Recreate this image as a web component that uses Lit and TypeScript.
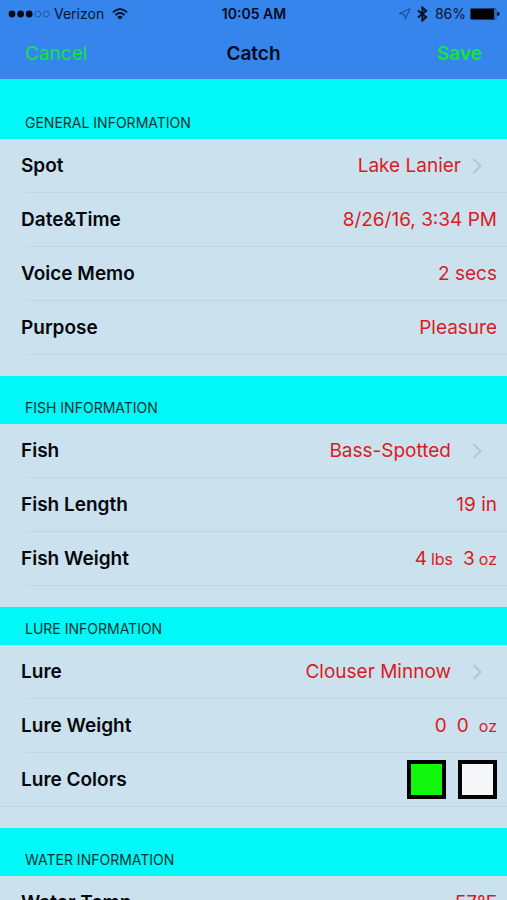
import { LitElement, html, css, svg, nothing } from "lit";
import { customElement, property } from "lit/decorators.js";

interface ValuePart {
  text: string;
  unit?: string;
  wide?: boolean;
}

interface Row {
  label: string;
  parts?: ValuePart[];
  colors?: { name: string; cls: string }[];
  link?: "near" | "far";
}

interface Section {
  title: string;
  size: "tall" | "medium" | "short";
  fullRule?: boolean;
  rows: Row[];
}

const sections: Section[] = [
  {
    title: "GENERAL INFORMATION",
    size: "tall",
    rows: [
      { label: "Spot", parts: [{ text: "Lake Lanier" }], link: "near" },
      { label: "Date&Time", parts: [{ text: "8/26/16, 3:34 PM" }] },
      { label: "Voice Memo", parts: [{ text: "2 secs" }] },
      { label: "Purpose", parts: [{ text: "Pleasure" }] },
    ],
  },
  {
    title: "FISH INFORMATION",
    size: "medium",
    rows: [
      { label: "Fish", parts: [{ text: "Bass-Spotted" }], link: "far" },
      { label: "Fish Length", parts: [{ text: "19 in" }] },
      {
        label: "Fish Weight",
        parts: [
          { text: "4", unit: "lbs" },
          { text: "3", unit: "oz" },
        ],
      },
    ],
  },
  {
    title: "LURE INFORMATION",
    size: "short",
    fullRule: true,
    rows: [
      { label: "Lure", parts: [{ text: "Clouser Minnow" }], link: "far" },
      { label: "Lure Weight", parts: [{ text: "0" }, { text: "0", unit: "oz", wide: true }] },
      {
        label: "Lure Colors",
        colors: [
          { name: "Green", cls: "green" },
          { name: "White", cls: "white" },
        ],
      },
    ],
  },
  {
    title: "WATER INFORMATION",
    size: "medium",
    rows: [{ label: "Water Temp", parts: [{ text: "57°F" }] }],
  },
];

@customElement("status-bar")
export class StatusBar extends LitElement {
  static styles = css`
    :host {
      display: grid;
      grid-template-columns: 1fr auto 1fr;
      align-items: center;
      height: 28px;
      padding: 0 7px 0 8px;
      font-size: 14px;
      line-height: 20px;
      color: #04152f;
    }
    .side {
      display: flex;
      align-items: center;
    }
    .end {
      justify-content: flex-end;
    }
    .carrier {
      margin: 0 8px 0 4px;
    }
    .time {
      font-weight: 600;
      color: #020c1e;
    }
    .pct {
      margin: 0 4px 0 7px;
    }
    .bt {
      margin-left: 6px;
    }
    svg {
      display: block;
      flex: none;
    }
  `;

  render() {
    return html`
      <div class="side">
        <svg width="42" height="10" viewBox="0 0 42 10" aria-label="Signal strength">
          ${[4, 12.6, 21.2].map((x) => svg`<circle cx=${x} cy="5" r="3.4" fill="#020a18" />`)}
          ${[29.8, 38.4].map(
            (x) => svg`<circle cx=${x} cy="5" r="3" fill="none" stroke="#1c4c94" stroke-width="0.8" />`
          )}
        </svg>
        <span class="carrier">Verizon</span>
        <svg width="16" height="12" viewBox="0 0 16 12" aria-label="Wi-Fi">
          <g fill="none" stroke="#03132c" stroke-width="1.9">
            <path d="M0.9 4.4Q8 -2.2 15.1 4.4" />
            <path d="M3.4 7.1Q8 2.8 12.6 7.1" />
          </g>
          <path d="M5.3 9Q8 6.6 10.7 9L8 11.7Z" fill="#03132c" />
        </svg>
      </div>
      <span class="time">10:05 AM</span>
      <div class="side end">
        <svg width="13" height="12" viewBox="0 0 13 12" aria-label="Location">
          <path d="M1 5.6L12 0.8L7.4 11.2L6.4 6.2Z" fill="none" stroke="#17407f" stroke-width="0.9" stroke-linejoin="round" />
        </svg>
        <svg class="bt" width="11" height="16" viewBox="0 0 11 16" aria-label="Bluetooth">
          <path d="M1 4.4L9.2 11.3L5.4 14.4V1.6L9.2 4.7L1 11.6" fill="none" stroke="#03132c" stroke-width="2" />
        </svg>
        <span class="pct">86%</span>
        <svg width="30" height="12" viewBox="0 0 30 12" aria-label="Battery">
          <rect x="0.5" y="0.5" width="25.5" height="11" rx="1" fill="none" stroke="#17407f" stroke-width="0.8" />
          <rect x="0.8" y="0.8" width="23.4" height="10.4" fill="#000" />
          <path d="M27.2 3.8Q29.8 4.4 29.8 6T27.2 8.2Z" fill="#03132c" />
        </svg>
      </div>
    `;
  }
}

@customElement("catch-row")
export class CatchRow extends LitElement {
  @property({ attribute: false }) row!: Row;

  static styles = css`
    :host {
      display: block;
    }
    .row {
      display: flex;
      align-items: center;
      justify-content: space-between;
      box-sizing: border-box;
      width: 100%;
      height: 53px;
      margin: 0;
      padding: 0 10px 0 21px;
      border: 0;
      background: none;
      font: inherit;
      line-height: 24px;
      color: #03080d;
      text-align: left;
    }
    .linked {
      padding-right: 24px;
    }
    .label {
      font-size: 19px;
      font-weight: 600;
    }
    .value {
      display: flex;
      align-items: center;
      gap: 10px;
      font-size: 19px;
      color: #dc1a22;
    }
    .part {
      display: flex;
      align-items: center;
      gap: 4px;
    }
    .wide {
      gap: 10px;
    }
    .unit {
      font-size: 16px;
    }
    .chevron {
      display: block;
    }
    .far {
      margin-left: 10px;
    }
    .swatches {
      display: flex;
      gap: 12px;
    }
    .swatch {
      box-sizing: border-box;
      width: 39px;
      height: 39px;
      padding: 0;
      border: 4px solid #000;
    }
    .green {
      background: #12f80c;
    }
    .white {
      background: #f5f6f7;
    }
  `;

  render() {
    const { label, parts, colors, link } = this.row;
    if (colors) {
      return html`<div class="row" role="group" aria-label=${label}>
        <span class="label">${label}</span>
        <span class="swatches">
          ${colors.map((c) => html`<button class="swatch ${c.cls}" aria-label=${c.name}></button>`)}
        </span>
      </div>`;
    }
    return html`<button class="row ${link ? "linked" : ""}">
      <span class="label">${label}</span>
      <span class="value">
        ${parts?.map(
          (p) => html`<span class="part ${p.wide ? "wide" : ""}"
            ><span>${p.text}</span>${p.unit ? html`<span class="unit">${p.unit}</span>` : nothing}</span
          >`
        )}
        ${link
          ? html`<svg class="chevron ${link}" width="12" height="18" viewBox="0 0 12 18" aria-hidden="true">
              <path d="M2.4 2L9.6 9L2.4 16" fill="none" stroke="#b9c4cd" stroke-width="1.9" />
            </svg>`
          : nothing}
      </span>
    </button>`;
  }
}

@customElement("app-root")
export class AppRoot extends LitElement {
  static styles = css`
    :host {
      display: flex;
      flex-direction: column;
      height: 100vh;
      font-family: Inter, "Liberation Sans", sans-serif;
      background: #cbe1ed;
    }
    .top {
      flex: none;
      background: #3585ec;
    }
    .nav {
      display: grid;
      grid-template-columns: 1fr auto 1fr;
      align-items: center;
      height: 51px;
      padding: 0 25px;
    }
    .action {
      justify-self: start;
      margin: 0;
      padding: 0;
      border: 0;
      background: none;
      font: inherit;
      font-size: 19px;
      line-height: 24px;
      color: #12e63c;
    }
    .save {
      justify-self: end;
      font-weight: 600;
    }
    .title {
      margin: 0;
      font-size: 19px;
      line-height: 24px;
      font-weight: 600;
      color: #020a18;
    }
    .form {
      flex: 1;
      min-height: 0;
      overflow-y: auto;
      scrollbar-width: none;
    }
    .heading {
      display: flex;
      align-items: flex-end;
      box-sizing: border-box;
      margin: 0;
      padding: 0 25px 6px;
      background: #00f8f8;
      font-size: 14px;
      line-height: 20px;
      font-weight: 400;
      color: #04322f;
    }
    .tall {
      height: 60px;
    }
    .medium {
      height: 48px;
    }
    .short {
      height: 38px;
    }
    .rows {
      margin: 0;
      padding: 0 0 21px;
      list-style: none;
    }
    .item::after {
      content: "";
      display: block;
      height: 1px;
      margin-left: 27px;
      background: #c1d6e2;
    }
    .full .item:last-child::after {
      margin-left: 0;
    }
  `;

  render() {
    return html`
      <header class="top">
        <status-bar></status-bar>
        <nav class="nav">
          <button class="action">Cancel</button>
          <h1 class="title">Catch</h1>
          <button class="action save">Save</button>
        </nav>
      </header>
      <main class="form">
        ${sections.map(
          (s) => html`<section>
            <h2 class="heading ${s.size}">${s.title}</h2>
            <ul class="rows ${s.fullRule ? "full" : ""}">
              ${s.rows.map((r) => html`<li class="item"><catch-row .row=${r}></catch-row></li>`)}
            </ul>
          </section>`
        )}
      </main>
    `;
  }
}
